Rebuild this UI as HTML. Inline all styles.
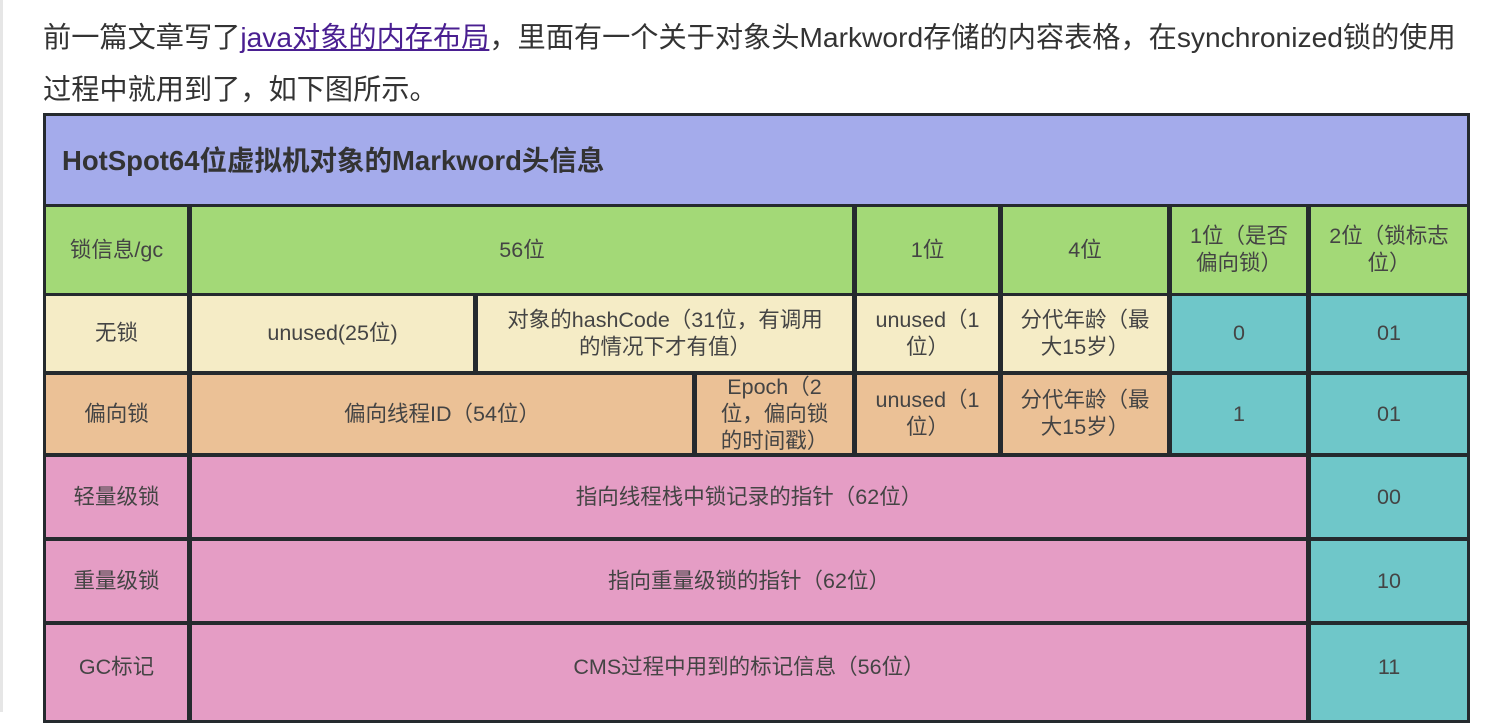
<!DOCTYPE html>
<html><head><meta charset="utf-8"><style>
body{margin:0;width:1492px;height:712px;overflow:hidden;background:#fff;position:relative;font-family:"Liberation Sans","Noto Sans CJK SC",sans-serif;}
.bar{position:absolute;left:0;top:0;width:3px;height:712px;background:#e6e6e6}
p{position:absolute;left:43px;margin:0;font-size:28.2px;color:#333;white-space:nowrap;line-height:32px}
a{color:#4a1f91;text-decoration:underline}
.t{position:absolute;left:43px;top:113px;width:1427px;height:610px;background:#252a2e}
.c{position:absolute;display:flex;align-items:center;justify-content:center;text-align:center;font-size:21.5px;color:#444;line-height:27px;box-sizing:border-box;padding:0 14px}
.g{background:#a3d977}.y{background:#f5ecc6}.o{background:#ebc196}.b{background:#6fc7c9}.p{background:#e59dc5}
</style></head><body>
<div class="bar"></div>
<p style="top:21px">前一篇文章写了<a>java对象的内存布局</a>，里面有一个关于对象头Markword存储的内容表格，在synchronized锁的使用</p>
<p style="top:73px">过程中就用到了，如下图所示。</p>
<div class="t"></div>
<div class="c" style="left:46px;top:116px;width:1421px;height:88px;background:#a4abeb;justify-content:flex-start;padding-left:16px;font-weight:bold;font-size:27.5px;color:#333">HotSpot64位虚拟机对象的Markword头信息</div>

<div class="c g" style="left:46px;top:207px;width:141px;height:86px">锁信息/gc</div>
<div class="c g" style="left:192px;top:207px;width:660px;height:86px">56位</div>
<div class="c g" style="left:857px;top:207px;width:141px;height:86px">1位</div>
<div class="c g" style="left:1003px;top:207px;width:164px;height:86px">4位</div>
<div class="c g" style="left:1172px;top:207px;width:134px;height:86px">1位（是否偏向锁）</div>
<div class="c g" style="left:1311px;top:207px;width:156px;height:86px">2位（锁标志位）</div>

<div class="c y" style="left:46px;top:296px;width:141px;height:75px">无锁</div>
<div class="c y" style="left:192px;top:296px;width:281px;height:75px">unused(25位)</div>
<div class="c y" style="left:478px;top:296px;width:374px;height:75px;padding:0 20px">对象的hashCode（31位，有调用的情况下才有值）</div>
<div class="c y" style="left:857px;top:296px;width:141px;height:75px">unused（1位）</div>
<div class="c y" style="left:1003px;top:296px;width:164px;height:75px">分代年龄（最大15岁）</div>
<div class="c b" style="left:1172px;top:296px;width:134px;height:75px">0</div>
<div class="c b" style="left:1311px;top:296px;width:156px;height:75px">01</div>

<div class="c o" style="left:46px;top:375px;width:141px;height:78px">偏向锁</div>
<div class="c o" style="left:192px;top:375px;width:500px;height:78px">偏向线程ID（54位）</div>
<div class="c o" style="left:697px;top:375px;width:155px;height:78px;padding:0 20px">Epoch（2位，偏向锁的时间戳）</div>
<div class="c o" style="left:857px;top:375px;width:141px;height:78px">unused（1位）</div>
<div class="c o" style="left:1003px;top:375px;width:164px;height:78px">分代年龄（最大15岁）</div>
<div class="c b" style="left:1172px;top:375px;width:134px;height:78px">1</div>
<div class="c b" style="left:1311px;top:375px;width:156px;height:78px">01</div>

<div class="c p" style="left:46px;top:457px;width:141px;height:80px">轻量级锁</div>
<div class="c p" style="left:192px;top:457px;width:1114px;height:80px">指向线程栈中锁记录的指针（62位）</div>
<div class="c b" style="left:1311px;top:457px;width:156px;height:80px">00</div>

<div class="c p" style="left:46px;top:541px;width:141px;height:80px">重量级锁</div>
<div class="c p" style="left:192px;top:541px;width:1114px;height:80px">指向重量级锁的指针（62位）</div>
<div class="c b" style="left:1311px;top:541px;width:156px;height:80px">10</div>

<div class="c p" style="left:46px;top:625px;width:141px;height:95px;padding-bottom:10px">GC标记</div>
<div class="c p" style="left:192px;top:625px;width:1114px;height:95px;padding-bottom:10px">CMS过程中用到的标记信息（56位）</div>
<div class="c b" style="left:1311px;top:625px;width:156px;height:95px;padding-bottom:10px">11</div>
</body></html>
